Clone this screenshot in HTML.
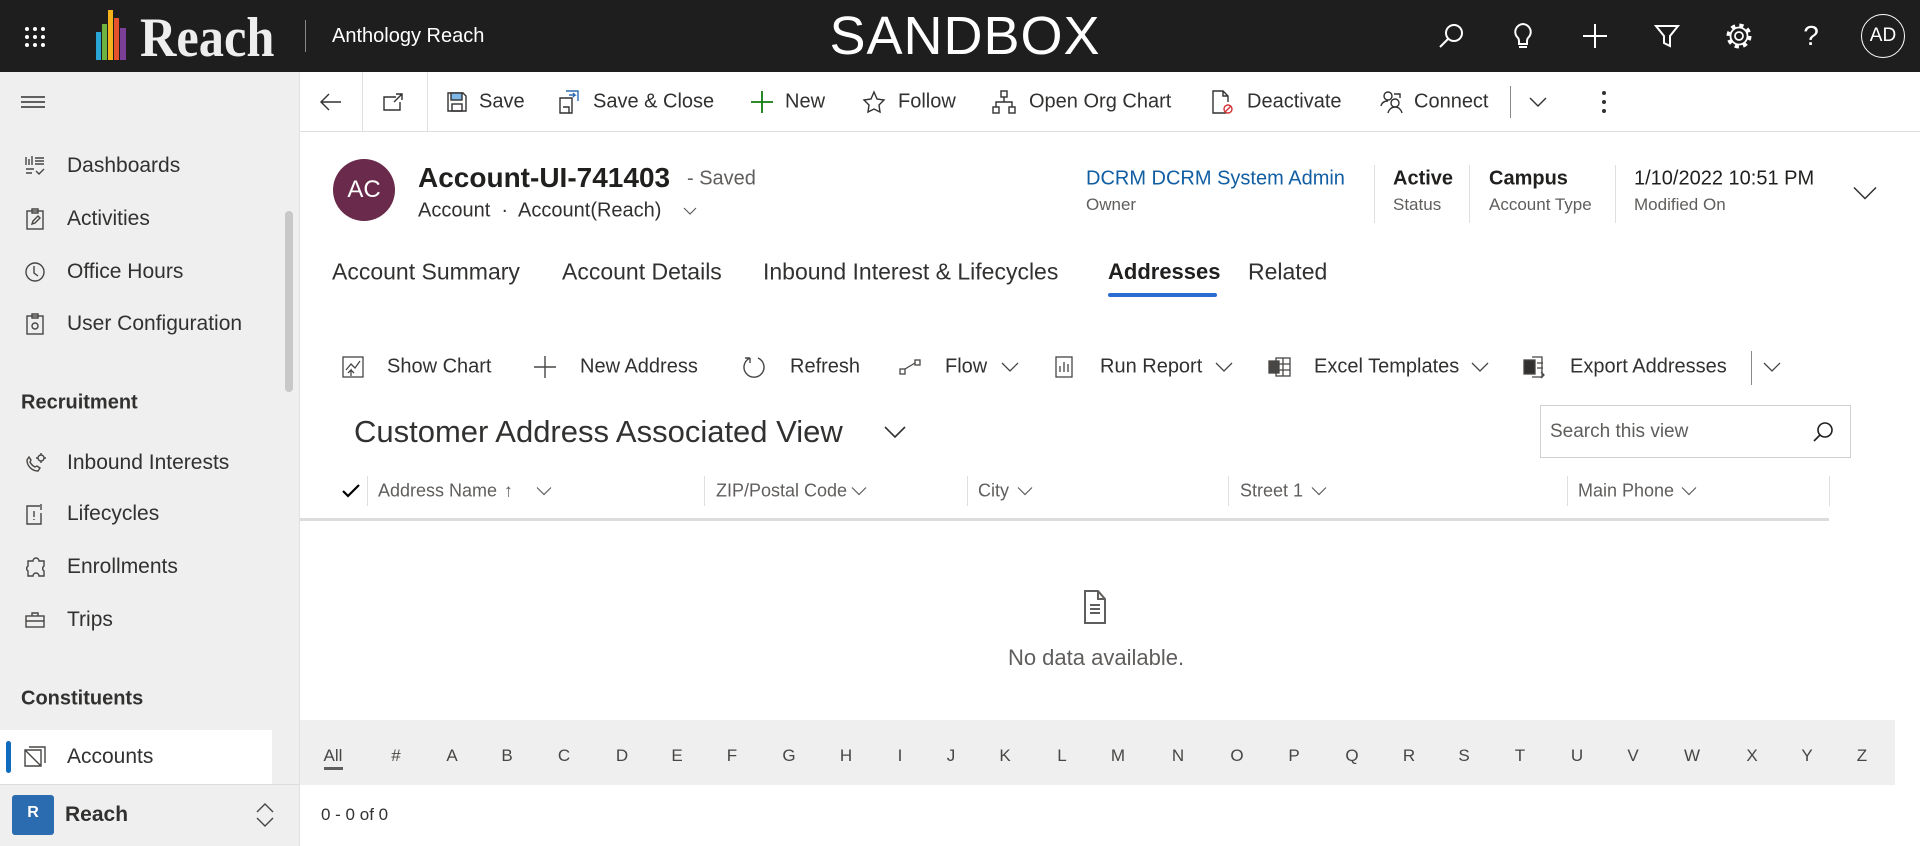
<!DOCTYPE html>
<html><head><meta charset="utf-8">
<style>
*{box-sizing:border-box;margin:0;padding:0}
body{width:1920px;height:846px;overflow:hidden;background:#fff;font-family:"Liberation Sans",sans-serif;color:#323130;position:relative}
.a{position:absolute;white-space:nowrap}
.hdr{position:absolute;left:0;top:0;width:1920px;height:72px;background:#1e1e1e}
.side{position:absolute;left:0;top:72px;width:300px;height:774px;background:#efefef;border-right:1px solid #e1e1e1}
.si{position:absolute;left:67px;font-size:21px;color:#323130;transform:translateY(-50%)}
.sic{position:absolute;left:24px;transform:translateY(-50%)}
.sh{position:absolute;left:21px;font-size:20px;font-weight:bold;color:#323130;transform:translateY(-50%)}
.tb{font-size:20px;color:#323130;transform:translateY(-50%)}
.ic{position:absolute;transform:translate(-50%,-50%)}
.tab{font-size:23px;color:#323130;transform:translateY(-50%)}
.col{font-size:18px;color:#605e5c;transform:translateY(-50%)}
.vs{position:absolute;width:1px;background:#e1dfdd}
.let{position:absolute;top:756px;font-size:17px;color:#484644;transform:translate(-50%,-50%)}
</style></head><body>

<div class="hdr"></div>
<svg class="ic" style="left:35px;top:37px" width="22" height="22" viewBox="0 0 22 22" fill="#fff">
<circle cx="3" cy="3" r="2"/><circle cx="11" cy="3" r="2"/><circle cx="19" cy="3" r="2"/>
<circle cx="3" cy="11" r="2"/><circle cx="11" cy="11" r="2"/><circle cx="19" cy="11" r="2"/>
<circle cx="3" cy="19" r="2"/><circle cx="11" cy="19" r="2"/><circle cx="19" cy="19" r="2"/></svg>
<svg class="a" style="left:96px;top:10px" width="36" height="50" viewBox="0 0 36 50">
<rect x="0" y="22" width="5" height="28" fill="#2aa6d6"/>
<rect x="6" y="14" width="5" height="36" fill="#6cb33f"/>
<rect x="12" y="0" width="5" height="50" fill="#f5b21a"/>
<rect x="18" y="8" width="5" height="42" fill="#e5522b"/>
<rect x="24" y="18" width="6" height="32" fill="#7b3f98"/>
</svg>
<div class="a" style="left:140px;top:2px;font-family:'Liberation Serif',serif;font-weight:bold;font-size:56px;color:#eee;transform:scaleX(0.9);transform-origin:left top;line-height:72px">Reach</div>
<div class="a" style="left:305px;top:20px;width:1px;height:32px;background:#888"></div>
<div class="a" style="left:332px;top:25px;font-size:20px;color:#fff">Anthology Reach</div>
<div class="a" style="left:965px;top:36px;transform:translate(-50%,-50%);font-size:54px;color:#fff;letter-spacing:1px">SANDBOX</div>
<svg class="ic" style="left:1451px;top:36px" width="26" height="26" viewBox="0 0 26 26" fill="none" stroke="#fff" stroke-width="2"><circle cx="16" cy="10" r="8"/><path d="M10 16 2 24"/></svg>
<svg class="ic" style="left:1523px;top:36px" width="20" height="28" viewBox="0 0 20 28" fill="none" stroke="#fff" stroke-width="2"><path d="M10 2a8 8 0 0 0-5 14c1 1 1 3 1 4v2h8v-2c0-1 0-3 1-4a8 8 0 0 0-5-14zM6 25h8"/></svg>
<svg class="ic" style="left:1595px;top:36px" width="26" height="26" viewBox="0 0 26 26" stroke="#fff" stroke-width="2"><path d="M13 1v24M1 13h24"/></svg>
<svg class="ic" style="left:1667px;top:36px" width="26" height="26" viewBox="0 0 26 26" fill="none" stroke="#fff" stroke-width="2"><path d="M2 3h22l-8 10v10l-6-3v-7z"/></svg>
<svg class="ic" style="left:1739px;top:36px" width="28" height="28" viewBox="0 0 28 28" fill="none" stroke="#fff"><circle cx="14" cy="14" r="4" stroke-width="1.8"/><circle cx="14" cy="14" r="8.5" stroke-width="1.8"/><circle cx="14" cy="14" r="10.5" stroke-width="4" stroke-dasharray="4.1 4.15"/></svg>
<div class="a" style="left:1811px;top:36px;transform:translate(-50%,-50%);font-size:28px;color:#fff">?</div>
<div class="a" style="left:1861px;top:14px;width:44px;height:44px;border:1.5px solid #fff;border-radius:50%;color:#fff;font-size:19px;text-align:center;line-height:41px">AD</div>

<div class="side"></div>
<svg class="ic" style="left:33px;top:102px" width="24" height="16" viewBox="0 0 24 16" stroke="#323130" stroke-width="1.5"><path d="M0 3h24M0 8h24M0 13h24"/></svg>
<div class="a" style="left:285px;top:211px;width:8px;height:181px;background:#c8c8c8;border-radius:4px"></div>

<svg class="sic" style="top:166px" width="22" height="22" viewBox="0 0 22 22" fill="none" stroke="#484644" stroke-width="1.4"><path d="M2 2v8M5 4v6M8 1v9M11 3h9M11 6h9M11 9h9M2 14h8M2 18h6M12 16l3 3 5-5"/></svg>
<div class="si" style="top:166px">Dashboards</div>
<svg class="sic" style="top:219px" width="22" height="22" viewBox="0 0 22 22" fill="none" stroke="#484644" stroke-width="1.4"><rect x="3" y="3" width="16" height="18"/><path d="M8 1h6v4H8zM8 16l1-3 5-5 2 2-5 5z"/></svg>
<div class="si" style="top:219px">Activities</div>
<svg class="sic" style="top:272px" width="22" height="22" viewBox="0 0 22 22" fill="none" stroke="#484644" stroke-width="1.4"><circle cx="11" cy="11" r="9"/><path d="M10 5v7l4 3"/></svg>
<div class="si" style="top:272px">Office Hours</div>
<svg class="sic" style="top:324px" width="22" height="22" viewBox="0 0 22 22" fill="none" stroke="#484644" stroke-width="1.4"><rect x="3" y="3" width="16" height="18"/><path d="M8 1h6v4H8z"/><circle cx="11" cy="13" r="3"/></svg>
<div class="si" style="top:324px">User Configuration</div>
<div class="sh" style="top:403px">Recruitment</div>
<svg class="sic" style="top:463px" width="24" height="22" viewBox="0 0 24 22" fill="none" stroke="#484644" stroke-width="1.4"><path d="M3 8c0 6 5 11 11 11l2-3-3-2-2 1c-2-1-4-3-5-5l1-2-2-3z"/><circle cx="17" cy="6" r="3"/><path d="M17 1v2M17 9v2M12 6h2M20 6h2"/></svg>
<div class="si" style="top:463px">Inbound Interests</div>
<svg class="sic" style="top:514px" width="22" height="22" viewBox="0 0 22 22" fill="none" stroke="#484644" stroke-width="1.4"><path d="M16 3H3v18h14V10"/><path d="M10 8v6M10 16v1M17 1v6"/></svg>
<div class="si" style="top:514px">Lifecycles</div>
<svg class="sic" style="top:567px" width="24" height="22" viewBox="0 0 24 22" fill="none" stroke="#484644" stroke-width="1.4"><path d="M4 5h5a3 3 0 0 1 6 0h5v5a3 3 0 0 0 0 5v5h-5a3 3 0 0 0-6 0H4v-5a3 3 0 0 1 0-5z"/></svg>
<div class="si" style="top:567px">Enrollments</div>
<svg class="sic" style="top:620px" width="22" height="18" viewBox="0 0 22 18" fill="none" stroke="#484644" stroke-width="1.4"><rect x="2" y="5" width="18" height="11"/><path d="M8 5V2h6v3M2 10h18"/></svg>
<div class="si" style="top:620px">Trips</div>
<div class="sh" style="top:699px">Constituents</div>
<div class="a" style="left:0;top:730px;width:272px;height:54px;background:#fff"></div>
<div class="a" style="left:6px;top:741px;width:5px;height:32px;background:#0f6cbd;border-radius:3px"></div>
<svg class="sic" style="top:757px;left:23px" width="24" height="22" viewBox="0 0 24 22" fill="none" stroke="#484644" stroke-width="1.4"><path d="M2 4h16v16H2zM6 1h16v16M2 4l16 16"/></svg>
<div class="si" style="top:757px">Accounts</div>
<div class="a" style="left:0;top:784px;width:300px;height:1px;background:#ddd"></div>
<div class="a" style="left:12px;top:795px;width:42px;height:40px;background:#2b6cb0;border-radius:3px;color:#fff;font-weight:bold;font-size:16px;text-align:center;line-height:36px">R</div>
<div class="a" style="left:65px;top:815px;transform:translateY(-50%);font-size:21px;font-weight:bold;color:#323130">Reach</div>
<svg class="ic" style="left:265px;top:815px" width="20" height="26" viewBox="0 0 20 26" fill="none" stroke="#484644" stroke-width="1.4"><path d="M2 10l8-8 8 8M2 16l8 8 8-8"/></svg>

<div class="a" style="left:300px;top:131px;width:1620px;height:1px;background:#e1dfdd"></div>
<div class="vs" style="left:362px;top:72px;height:59px"></div>
<div class="vs" style="left:427px;top:72px;height:59px"></div>
<svg class="ic" style="left:331px;top:102px" width="22" height="18" viewBox="0 0 22 18" fill="none" stroke="#323130" stroke-width="1.4"><path d="M21 9H2M9 1 1 9l8 8"/></svg>
<svg class="ic" style="left:393px;top:102px" width="22" height="20" viewBox="0 0 22 20" fill="none" stroke="#323130" stroke-width="1.4"><path d="M14 5H2v13h16V10M14 2h6v6M20 2l-8 8"/></svg>
<svg class="ic" style="left:457px;top:102px" width="22" height="22" viewBox="0 0 22 22" fill="none" stroke="#323130" stroke-width="1.4"><path d="M2 2h15l3 3v15H2z"/><rect x="5" y="2" width="11" height="7" fill="#7eb6e6"/><rect x="6" y="13" width="10" height="7"/></svg>
<div class="a tb" style="left:479px;top:102px">Save</div>
<svg class="ic" style="left:569px;top:102px" width="22" height="24" viewBox="0 0 22 24" fill="none" stroke="#323130" stroke-width="1.4"><path d="M2 8h12v15H2zM5 17h6v6"/><path d="M8 1h12v10" stroke="#2b6cb0"/><path d="M11 5h6l-2-2M17 5l-2 2" stroke="#2b6cb0"/></svg>
<div class="a tb" style="left:593px;top:102px">Save &amp; Close</div>
<svg class="ic" style="left:762px;top:102px" width="24" height="24" viewBox="0 0 24 24" stroke="#107c10" stroke-width="1.8"><path d="M12 1v22M1 12h22"/></svg>
<div class="a tb" style="left:785px;top:102px">New</div>
<svg class="ic" style="left:874px;top:102px" width="24" height="24" viewBox="0 0 24 24" fill="none" stroke="#323130" stroke-width="1.4"><path d="M12 2l3 7 7 1-5 5 1 7-6-3-6 3 1-7-5-5 7-1z"/></svg>
<div class="a tb" style="left:898px;top:102px">Follow</div>
<svg class="ic" style="left:1004px;top:102px" width="24" height="24" viewBox="0 0 24 24" fill="none" stroke="#323130" stroke-width="1.4"><rect x="9" y="1" width="6" height="6"/><rect x="1" y="17" width="6" height="6"/><rect x="17" y="17" width="6" height="6"/><path d="M12 7v5M4 17v-5h16v5"/></svg>
<div class="a tb" style="left:1029px;top:102px">Open Org Chart</div>
<svg class="ic" style="left:1222px;top:102px" width="24" height="26" viewBox="0 0 24 26" fill="none" stroke="#323130" stroke-width="1.4"><path d="M16 24H3V2h10l5 5v6M13 2v5h5"/><circle cx="18" cy="20" r="4" stroke="#d13438"/><path d="M15 23l6-6" stroke="#d13438"/></svg>
<div class="a tb" style="left:1247px;top:102px">Deactivate</div>
<svg class="ic" style="left:1392px;top:102px" width="24" height="24" viewBox="0 0 24 24" fill="none" stroke="#323130" stroke-width="1.4"><circle cx="8" cy="6" r="4"/><path d="M1 16c1-4 4-5 7-5M14 4h6v4"/><circle cx="15" cy="13" r="4"/><path d="M8 23c1-4 4-6 7-6s6 2 7 6"/></svg>
<div class="a tb" style="left:1414px;top:102px">Connect</div>
<div class="vs" style="left:1510px;top:86px;height:32px;background:#8a8886"></div>
<svg class="ic" style="left:1538px;top:102px" width="18" height="10" viewBox="0 0 18 10" fill="none" stroke="#323130" stroke-width="1.4"><path d="M1 1l8 8 8-8"/></svg>
<svg class="ic" style="left:1604px;top:102px" width="4" height="22" viewBox="0 0 4 22" fill="#323130"><circle cx="2" cy="2" r="2"/><circle cx="2" cy="11" r="2"/><circle cx="2" cy="20" r="2"/></svg>

<div class="a" style="left:333px;top:159px;width:62px;height:62px;border-radius:50%;background:#6a2a4b;color:#fff;font-size:24px;text-align:center;line-height:62px">AC</div>
<div class="a" style="left:418px;top:178px;transform:translateY(-50%);font-size:28px;font-weight:bold;color:#201f1e">Account-UI-741403</div>
<div class="a" style="left:687px;top:179px;transform:translateY(-50%);font-size:20px;color:#605e5c">- Saved</div>
<div class="a" style="left:418px;top:211px;transform:translateY(-50%);font-size:20px;color:#323130">Account &nbsp;·&nbsp; Account(Reach)</div>
<svg class="ic" style="left:690px;top:211px" width="14" height="8" viewBox="0 0 14 8" fill="none" stroke="#605e5c" stroke-width="1.2"><path d="M1 1l6 6 6-6"/></svg>
<div class="a" style="left:1086px;top:179px;transform:translateY(-50%);font-size:20px;color:#115ea3">DCRM DCRM System Admin</div>
<div class="a" style="left:1086px;top:205px;transform:translateY(-50%);font-size:17px;color:#605e5c">Owner</div>
<div class="vs" style="left:1374px;top:165px;height:58px"></div>
<div class="vs" style="left:1469px;top:165px;height:58px"></div>
<div class="vs" style="left:1615px;top:165px;height:58px"></div>
<div class="a" style="left:1393px;top:179px;transform:translateY(-50%);font-size:20px;font-weight:bold;color:#201f1e">Active</div>
<div class="a" style="left:1393px;top:205px;transform:translateY(-50%);font-size:17px;color:#605e5c">Status</div>
<div class="a" style="left:1489px;top:179px;transform:translateY(-50%);font-size:20px;font-weight:bold;color:#201f1e">Campus</div>
<div class="a" style="left:1489px;top:205px;transform:translateY(-50%);font-size:17px;color:#605e5c">Account Type</div>
<div class="a" style="left:1634px;top:179px;transform:translateY(-50%);font-size:20px;color:#201f1e">1/10/2022 10:51 PM</div>
<div class="a" style="left:1634px;top:205px;transform:translateY(-50%);font-size:17px;color:#605e5c">Modified On</div>
<svg class="ic" style="left:1865px;top:193px" width="24" height="13" viewBox="0 0 24 13" fill="none" stroke="#323130" stroke-width="1.5"><path d="M1 1l11 11 11-11"/></svg>

<div class="a tab" style="left:332px;top:272px">Account Summary</div>
<div class="a tab" style="left:562px;top:272px">Account Details</div>
<div class="a tab" style="left:763px;top:272px">Inbound Interest &amp; Lifecycles</div>
<div class="a tab" style="left:1108px;top:272px;font-weight:bold;color:#201f1e;font-size:22px">Addresses</div>
<div class="a" style="left:1108px;top:293px;width:109px;height:4px;background:#2b6cd1;border-radius:2px"></div>
<div class="a tab" style="left:1248px;top:272px">Related</div>

<svg class="ic" style="left:353px;top:367px" width="22" height="22" viewBox="0 0 22 22" fill="none" stroke="#484644" stroke-width="1.3"><rect x="1" y="1" width="20" height="20"/><path d="M4 14l5-6 4 4 5-7M9 20v-6l-3 3M9 14l3 3"/></svg>
<div class="a tb" style="left:387px;top:367px">Show Chart</div>
<svg class="ic" style="left:545px;top:367px" width="24" height="24" viewBox="0 0 24 24" stroke="#484644" stroke-width="1.4"><path d="M12 1v22M1 12h22"/></svg>
<div class="a tb" style="left:580px;top:367px">New Address</div>
<svg class="ic" style="left:754px;top:367px" width="24" height="24" viewBox="0 0 24 24" fill="none" stroke="#484644" stroke-width="1.4"><path d="M8 3a10 10 0 1 0 8 0M8 3v5M8 3H3"/></svg>
<div class="a tb" style="left:790px;top:367px">Refresh</div>
<svg class="ic" style="left:910px;top:367px" width="22" height="18" viewBox="0 0 22 18" fill="none" stroke="#484644" stroke-width="1.3"><rect x="1" y="11" width="5" height="5"/><rect x="16" y="2" width="5" height="5"/><path d="M6 11l10-6"/></svg>
<div class="a tb" style="left:945px;top:367px">Flow</div>
<svg class="ic" style="left:1010px;top:367px" width="18" height="10" viewBox="0 0 18 10" fill="none" stroke="#484644" stroke-width="1.3"><path d="M1 1l8 8 8-8"/></svg>
<svg class="ic" style="left:1064px;top:367px" width="20" height="22" viewBox="0 0 20 22" fill="none" stroke="#484644" stroke-width="1.3"><rect x="2" y="1" width="16" height="20"/><path d="M6 16v-6M10 16V6M14 16v-8"/></svg>
<div class="a tb" style="left:1100px;top:367px">Run Report</div>
<svg class="ic" style="left:1224px;top:367px" width="18" height="10" viewBox="0 0 18 10" fill="none" stroke="#484644" stroke-width="1.3"><path d="M1 1l8 8 8-8"/></svg>
<svg class="ic" style="left:1280px;top:367px" width="24" height="22" viewBox="0 0 24 22" fill="none" stroke="#484644" stroke-width="1.3"><rect x="8" y="2" width="14" height="18"/><path d="M8 8h14M8 14h14M15 2v18"/><rect x="1" y="5" width="10" height="12" fill="#484644"/></svg>
<div class="a tb" style="left:1314px;top:367px">Excel Templates</div>
<svg class="ic" style="left:1480px;top:367px" width="18" height="10" viewBox="0 0 18 10" fill="none" stroke="#484644" stroke-width="1.3"><path d="M1 1l8 8 8-8"/></svg>
<svg class="ic" style="left:1535px;top:367px" width="24" height="24" viewBox="0 0 24 24" fill="none" stroke="#484644" stroke-width="1.3"><path d="M9 2h10v20H9"/><path d="M14 8h6M14 13h6M18 17l3 3-3 3"/><rect x="1" y="5" width="11" height="14" fill="#323130"/></svg>
<div class="a tb" style="left:1570px;top:367px">Export Addresses</div>
<div class="vs" style="left:1751px;top:351px;height:34px;background:#8a8886"></div>
<svg class="ic" style="left:1772px;top:367px" width="18" height="10" viewBox="0 0 18 10" fill="none" stroke="#484644" stroke-width="1.3"><path d="M1 1l8 8 8-8"/></svg>

<div class="a" style="left:354px;top:432px;transform:translateY(-50%);font-size:31px;color:#323130">Customer Address Associated View</div>
<svg class="ic" style="left:895px;top:432px" width="22" height="12" viewBox="0 0 22 12" fill="none" stroke="#323130" stroke-width="1.6"><path d="M1 1l10 10 10-10"/></svg>
<div class="a" style="left:1540px;top:405px;width:311px;height:53px;border:1px solid #d2d0ce;background:#fff"></div>
<div class="a" style="left:1550px;top:432px;transform:translateY(-50%);font-size:19px;color:#605e5c">Search this view</div>
<svg class="ic" style="left:1823px;top:432px" width="22" height="22" viewBox="0 0 22 22" fill="none" stroke="#201f1e" stroke-width="1.6"><circle cx="13" cy="9" r="7"/><path d="M8 14 2 20"/></svg>

<svg class="ic" style="left:351px;top:491px" width="18" height="14" viewBox="0 0 18 14" fill="none" stroke="#000" stroke-width="2.2"><path d="M1 7l5 5L17 1"/></svg>
<div class="vs" style="left:367px;top:476px;height:30px"></div>
<div class="a col" style="left:378px;top:491px">Address Name</div>
<div class="a col" style="left:504px;top:491px">↑</div>
<svg class="ic" style="left:544px;top:491px" width="16" height="9" viewBox="0 0 16 9" fill="none" stroke="#605e5c" stroke-width="1.2"><path d="M1 1l7 7 7-7"/></svg>
<div class="vs" style="left:704px;top:476px;height:30px"></div>
<div class="a col" style="left:716px;top:491px">ZIP/Postal Code</div>
<svg class="ic" style="left:859px;top:491px" width="16" height="9" viewBox="0 0 16 9" fill="none" stroke="#605e5c" stroke-width="1.2"><path d="M1 1l7 7 7-7"/></svg>
<div class="vs" style="left:967px;top:476px;height:30px"></div>
<div class="a col" style="left:978px;top:491px">City</div>
<svg class="ic" style="left:1025px;top:491px" width="16" height="9" viewBox="0 0 16 9" fill="none" stroke="#605e5c" stroke-width="1.2"><path d="M1 1l7 7 7-7"/></svg>
<div class="vs" style="left:1228px;top:476px;height:30px"></div>
<div class="a col" style="left:1240px;top:491px">Street 1</div>
<svg class="ic" style="left:1319px;top:491px" width="16" height="9" viewBox="0 0 16 9" fill="none" stroke="#605e5c" stroke-width="1.2"><path d="M1 1l7 7 7-7"/></svg>
<div class="vs" style="left:1567px;top:476px;height:30px"></div>
<div class="a col" style="left:1578px;top:491px">Main Phone</div>
<svg class="ic" style="left:1689px;top:491px" width="16" height="9" viewBox="0 0 16 9" fill="none" stroke="#605e5c" stroke-width="1.2"><path d="M1 1l7 7 7-7"/></svg>
<div class="vs" style="left:1829px;top:476px;height:30px"></div>
<div class="a" style="left:300px;top:518px;width:1529px;height:3px;background:#dcdcdc"></div>

<svg class="ic" style="left:1095px;top:607px" width="22" height="34" viewBox="0 0 22 34" fill="none" stroke="#605e5c" stroke-width="2"><path d="M1 1h13l7 8v24H1z M14 1v8h7"/><path d="M6 15h10M6 19h10M6 23h10"/></svg>
<div class="a" style="left:1096px;top:658px;transform:translate(-50%,-50%);font-size:22px;color:#605e5c">No data available.</div>

<div class="a" style="left:300px;top:720px;width:1595px;height:65px;background:#efefef"></div>
<div class="let" style="left:333px">All</div>
<div class="a" style="left:324px;top:767px;width:19px;height:3px;background:#605e5c"></div>
<div class="let" style="left:396px">#</div><div class="let" style="left:452px">A</div><div class="let" style="left:507px">B</div><div class="let" style="left:564px">C</div><div class="let" style="left:622px">D</div><div class="let" style="left:677px">E</div><div class="let" style="left:732px">F</div><div class="let" style="left:789px">G</div><div class="let" style="left:846px">H</div><div class="let" style="left:900px">I</div><div class="let" style="left:951px">J</div><div class="let" style="left:1005px">K</div><div class="let" style="left:1062px">L</div><div class="let" style="left:1118px">M</div><div class="let" style="left:1178px">N</div><div class="let" style="left:1237px">O</div><div class="let" style="left:1294px">P</div><div class="let" style="left:1352px">Q</div><div class="let" style="left:1409px">R</div><div class="let" style="left:1464px">S</div><div class="let" style="left:1520px">T</div><div class="let" style="left:1577px">U</div><div class="let" style="left:1633px">V</div><div class="let" style="left:1692px">W</div><div class="let" style="left:1752px">X</div><div class="let" style="left:1807px">Y</div><div class="let" style="left:1862px">Z</div>
<div class="a" style="left:321px;top:815px;transform:translateY(-50%);font-size:17px;color:#323130">0 - 0 of 0</div>
</body></html>
